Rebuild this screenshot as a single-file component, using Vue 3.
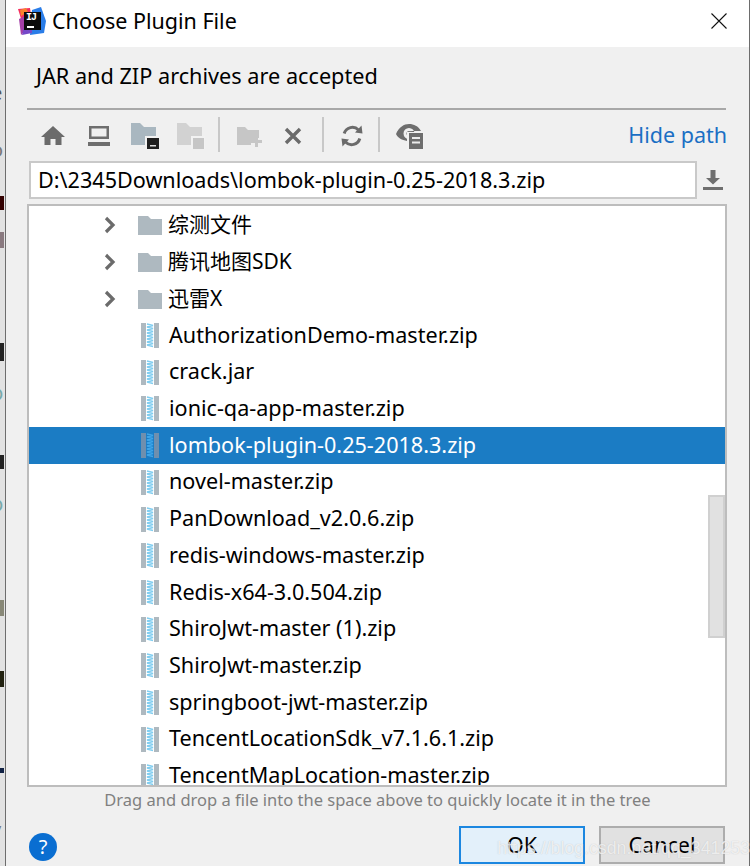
<script setup>
const folders = ['综测文件', '腾讯地图SDK', '迅雷X']
const files = [
  'AuthorizationDemo-master.zip', 'crack.jar', 'ionic-qa-app-master.zip',
  'lombok-plugin-0.25-2018.3.zip', 'novel-master.zip', 'PanDownload_v2.0.6.zip',
  'redis-windows-master.zip', 'Redis-x64-3.0.504.zip', 'ShiroJwt-master (1).zip',
  'ShiroJwt-master.zip', 'springboot-jwt-master.zip', 'TencentLocationSdk_v7.1.6.1.zip',
  'TencentMapLocation-master.zip'
]
const selected = 'lombok-plugin-0.25-2018.3.zip'
const zig = 'M6 1 12 2.500 6 4 12 5.500 6 7 12 8.500 6 10 12 11.500 6 13 12 14.500 6 16 12 17.500 6 19 12 20.500 6 22 12 23.500'
</script>

<template>
  <div class="stage">
    <div class="behind">
      <span class="frag" style="top:81px;color:#555">e</span>
      <span class="frag" style="top:138px;color:#777">o</span>
      <i class="blob" style="top:196px;height:14px;background:#300"></i>
      <i class="blob" style="top:232px;height:16px;background:#8a7a80"></i>
      <span class="frag" style="top:286px;color:#b08a50">1</span>
      <i class="blob" style="top:343px;height:18px;background:#222"></i>
      <span class="frag" style="top:381px;color:#7aa">p</span>
      <i class="blob" style="top:455px;height:14px;background:#222"></i>
      <span class="frag" style="top:492px;color:#7aa">p</span>
      <i class="blob" style="top:600px;height:16px;background:#887"></i>
      <i class="blob" style="top:671px;height:16px;background:#221"></i>
      <i class="blob" style="top:768px;height:5px;background:#124"></i>
      <span class="frag" style="top:818px;color:#777">v</span>
    </div>

    <section class="window">
      <header class="titlebar">
        <span class="logo">
          <svg width="28" height="28" viewBox="0 0 28 28">
            <path d="M0 2 12 1 13 8 4 15Z" fill="#f5305f" />
            <path d="M2 3 8 1 10 5 3 9Z" fill="#f7822c" />
            <path d="M1 12 7 9 7 24 3 28Z" fill="#a43fa6" />
            <path d="M14 3 23 0 28 14 26 26 12 28Z" fill="#2a7de8" />
            <path d="M6 20H14V26L4 28Z" fill="#7548c8" />
            <rect x="6" y="5" width="17" height="18" fill="#0b0b0b" />
          </svg>
          <b class="ij">IJ</b>
          <i class="ij-bar"></i>
        </span>
        <span class="title">Choose Plugin File</span>
        <svg class="close" width="16" height="16" viewBox="0 0 16 16">
          <path d="M.5.5l15 15M15.500.5l-15 15" stroke="#111" stroke-width="1.100" fill="none" />
        </svg>
      </header>

      <main class="body">
        <p class="hint">JAR and ZIP archives are accepted</p>
        <div class="rule"></div>

        <div class="toolbar">
          <div class="tools">
            <svg class="tool" width="24" height="24" viewBox="0 0 24 24"><path d="M12 2 24 13H20.500V21H14.500V15H9.500V21H3.500V13H0Z" fill="#6b6b6b" /></svg>
            <svg class="tool" width="24" height="24" viewBox="0 0 24 24"><path d="M2 2H22V15H2ZM4.500 4.500V12.500H19.500V4.500ZM1 18H23V22H1Z" fill="#6e6e6e" fill-rule="evenodd" /></svg>
            <svg class="tool" width="28" height="26" viewBox="0 0 28 26"><path d="M0 0H9L13 4H25V22H0Z" fill="#a9b7c0" /><rect x="14" y="13" width="14" height="14" fill="#f2f2f2" /><rect x="16" y="15" width="12" height="11" fill="#1f1f1f" /><rect x="19" y="22" width="6" height="1.500" fill="#ddd" /></svg>
            <svg class="tool" width="28" height="26" viewBox="0 0 28 26"><path d="M0 0H9L13 4H25V22H0Z" fill="#d2d2d2" /><rect x="14" y="13" width="14" height="14" fill="#f2f2f2" /><rect x="16" y="15" width="11" height="11" fill="#c6c6c6" /></svg>
            <i class="vsep"></i>
            <svg class="tool" width="26" height="24" viewBox="0 0 26 24"><path d="M0 3H8L11 6H22V14H18V18H14V21H0Z" fill="#c6c6c6" /><path d="M18 12H21V16H25V19H21V23H18V19H14V16H18Z" fill="#c6c6c6" /></svg>
            <svg class="tool" width="18" height="18" viewBox="0 0 18 18"><path d="M2 2 16 16M16 2 2 16" stroke="#6b6b6b" stroke-width="3.400" fill="none" /></svg>
            <i class="vsep"></i>
            <svg class="tool" width="22" height="24" viewBox="0 0 22 24"><path d="M3.200 9.500A8.500 8.500 0 0 1 17.500 6M18.800 14.500A8.500 8.500 0 0 1 4.500 18" stroke="#6b6b6b" stroke-width="3" fill="none" /><path d="M14 8.500 21.500 9.500 20.500 1.500ZM8 15.500.5 14.500 1.500 22.500Z" fill="#6b6b6b" /></svg>
            <i class="vsep"></i>
            <svg class="tool" width="28" height="26" viewBox="0 0 28 26"><path fill-rule="evenodd" d="M0 11C3 4 8 1 13 1S22 3 25 8H16A5 5 0 0 0 11 13V18C6 17 2 15 0 11ZM13 5A5.500 5.500 0 1 0 13 16 5.500 5.500 0 1 0 13 5Z" fill="#6e6e6e" /><circle cx="13" cy="10.500" r="2.500" fill="#6e6e6e" /><rect x="11" y="9" width="17" height="17" fill="#f2f2f2" /><rect x="13" y="10" width="14" height="16" fill="#6e6e6e" /><path d="M16 15H24M16 19.500H24" stroke="#ececec" stroke-width="2" /></svg>
          </div>
          <span class="link">Hide path</span>
        </div>

        <div class="pathrow">
          <div class="path">D:\2345Downloads\lombok-plugin-0.25-2018.3.zip</div>
          <svg width="22" height="22" viewBox="0 0 22 22" class="dl"><path d="M8.500 1H13.500V9H18L11 15.500 4 9H8.500Z" fill="#6e6e6e" /><rect x="1" y="18" width="20" height="3" fill="#6e6e6e" /></svg>
        </div>

        <div class="tree">
          <div v-for="f in folders" :key="f" class="row folder">
            <svg class="chev" width="12" height="18" viewBox="0 0 12 18"><path d="M2 2 9 9 2 16" stroke="#6b6b6b" stroke-width="3.200" fill="none" /></svg>
            <svg class="fold" width="24" height="20" viewBox="0 0 24 20"><path d="M0 1H10L13 4H24V20H0Z" fill="#aeb9c0" /></svg>
            <span class="cjk">{{ f }}</span>
          </div>
          <div v-for="f in files" :key="f" class="row file" :class="{ sel: f === selected }">
            <svg class="zip" width="18" height="25" viewBox="0 0 18 25">
              <rect class="zs" width="5" height="25" />
              <rect class="zs" x="13" width="5" height="25" />
              <path :d="zig" class="zz" fill="none" stroke-width="1.400" />
            </svg>
            <span>{{ f }}</span>
          </div>
          <div class="thumb"></div>
        </div>

        <p class="drag">Drag and drop a file into the space above to quickly locate it in the tree</p>

        <footer class="foot">
          <span class="help">?</span>
          <span class="btn ok">OK</span>
          <span class="btn cancel">Cancel</span>
        </footer>
      </main>
      <span class="mark">https://blog.csdn.net/qq_3412530</span>
    </section>
  </div>
</template>

<style>
html, body { margin: 0; background: #f0f0f0; }
</style>

<style scoped>
.stage {
  width: 750px; height: 866px; display: flex; overflow: hidden;
  font-family: "Noto Sans", "Noto Sans CJK SC", sans-serif; color: #000;
}
.behind { width: 5px; flex: none; background: #e2e2e2; position: relative; overflow: hidden; }
.frag { position: absolute; left: -9px; font-size: 20px; line-height: 24px; }
.blob { position: absolute; left: 0; width: 4px; }
.window {
  flex: 1; position: relative; display: flex; flex-direction: column;
  border-left: 1px solid #6d6d6d; border-right: 1px solid #6d6d6d; background: #f0f0f0;
}
.titlebar { height: 47px; flex: none; box-sizing: border-box; background: #fff; display: flex; align-items: center; padding: 0 22px 5px 12px; }
.logo { position: relative; width: 28px; height: 28px; flex: none; display: block; }
.logo svg { display: block; }
.ij { position: absolute; left: 8px; top: 5px; color: #fff; font: bold 10px/12px "Liberation Mono", monospace; letter-spacing: -1px; }
.ij-bar { position: absolute; left: 9px; top: 19px; width: 7px; height: 2px; background: #fff; }
.title { margin-left: 6px; font-size: 21.5px; flex: 1; line-height: 28px; }
.close { flex: none; }
.body { flex: 1; padding-left: 22px; padding-right: 22px; display: flex; flex-direction: column; min-height: 0; }
.hint { margin: 0; padding-left: 8px; height: 61px; flex: none; box-sizing: border-box; padding-top: 15px; font-size: 21.7px; line-height: 28px; }
.rule { height: 2px; background: #a8a8a8; flex: none; margin-left: -1px; margin-right: 1px; }
.toolbar { height: 51px; flex: none; display: flex; align-items: center; justify-content: space-between; }
.tools { display: flex; align-items: center; width: 400px; height: 35px; }
.tool { flex: none; display: block; }
.tools > :nth-child(1) { margin-left: 13px; }
.tools > :nth-child(2) { margin-left: 22px; }
.tools > :nth-child(3) { margin-left: 20px; }
.tools > :nth-child(4) { margin-left: 18px; }
.tools > :nth-child(5) { margin-left: 13px; }
.tools > :nth-child(6) { margin-left: 17px; }
.tools > :nth-child(7) { margin-left: 21px; }
.tools > :nth-child(8) { margin-left: 20px; }
.tools > :nth-child(9) { margin-left: 17px; }
.tools > :nth-child(10) { margin-left: 15px; }
.tools > :nth-child(11) { margin-left: 16px; }
.vsep { width: 2px; height: 35px; background: #c8c8c8; flex: none; display: block; margin-bottom: 2px; }
.link { color: #1a6fc4; font-size: 21.5px; line-height: 28px; margin-bottom: 2px; }
.pathrow { display: flex; align-items: center; flex: none; height: 38px; padding-left: 1px; }
.path {
  width: 668px; height: 38px; box-sizing: border-box; flex: none;
  border: 2px solid #c9c9c9; background: #fff; padding-left: 7px; font-size: 21.6px; line-height: 34px;
}
.dl { margin-left: 5px; flex: none; }
.tree {
  margin-top: 5px; height: 583px; flex: none; box-sizing: border-box; position: relative; overflow: hidden;
  border: 2px solid #bdbdbd; background: #fff; margin-left: -1px; padding-top: 1px;
}
.row { height: 36.73px; display: flex; align-items: center; font-size: 21.6px; white-space: nowrap; }
.row span { line-height: 28px; margin-bottom: 2px; }
.cjk { font-size: 21px; }
.chev { margin-left: 75px; flex: none; }
.fold { margin-left: 22px; margin-right: 6px; flex: none; }
.zip { margin-left: 112px; margin-right: 10px; flex: none; }
.zs { fill: #aeb9c0; }
.zz { stroke: #7fcdf0; }
.sel { background: #1b7cc4; color: #fff; }
.sel .zs { fill: #6f8fae; }
.sel .zz { stroke: #3ea6ea; }
.thumb {
  position: absolute; right: 0; top: 289px; width: 17px; height: 143px;
  box-sizing: border-box; background: #e1e1e1; border: 2px solid #d0d0d0;
}
.drag { margin: 0; height: 29px; flex: none; box-sizing: border-box; padding-top: 1px; text-align: center; font-size: 16.5px; line-height: 24px; color: #808080; }
.foot { flex: 1; display: flex; align-items: flex-start; padding-top: 10px; }
.help {
  width: 28px; height: 28px; border-radius: 50%; background: #0a6ed1; color: #fff; flex: none;
  margin-left: 1px; margin-top: 7px; text-align: center; font-size: 20px; line-height: 28px;
}
.btn {
  width: 126px; height: 38px; box-sizing: border-box; display: block; text-align: center; flex: none;
  font-size: 21.5px; line-height: 34px; border: 2px solid;
}
.ok { margin-left: 402px; background: #e3f0fa; border-color: #1c87e0; }
.cancel { margin-left: 14px; background: #e1e1e1; border-color: #adadad; }
.mark {
  position: absolute; left: 491px; top: 836px; white-space: nowrap;
  font: 17.8px/24px "Liberation Sans", sans-serif; color: rgba(255, 255, 255, .72);
  text-shadow: 0 0 1px rgba(150, 150, 150, .5);
}
</style>
